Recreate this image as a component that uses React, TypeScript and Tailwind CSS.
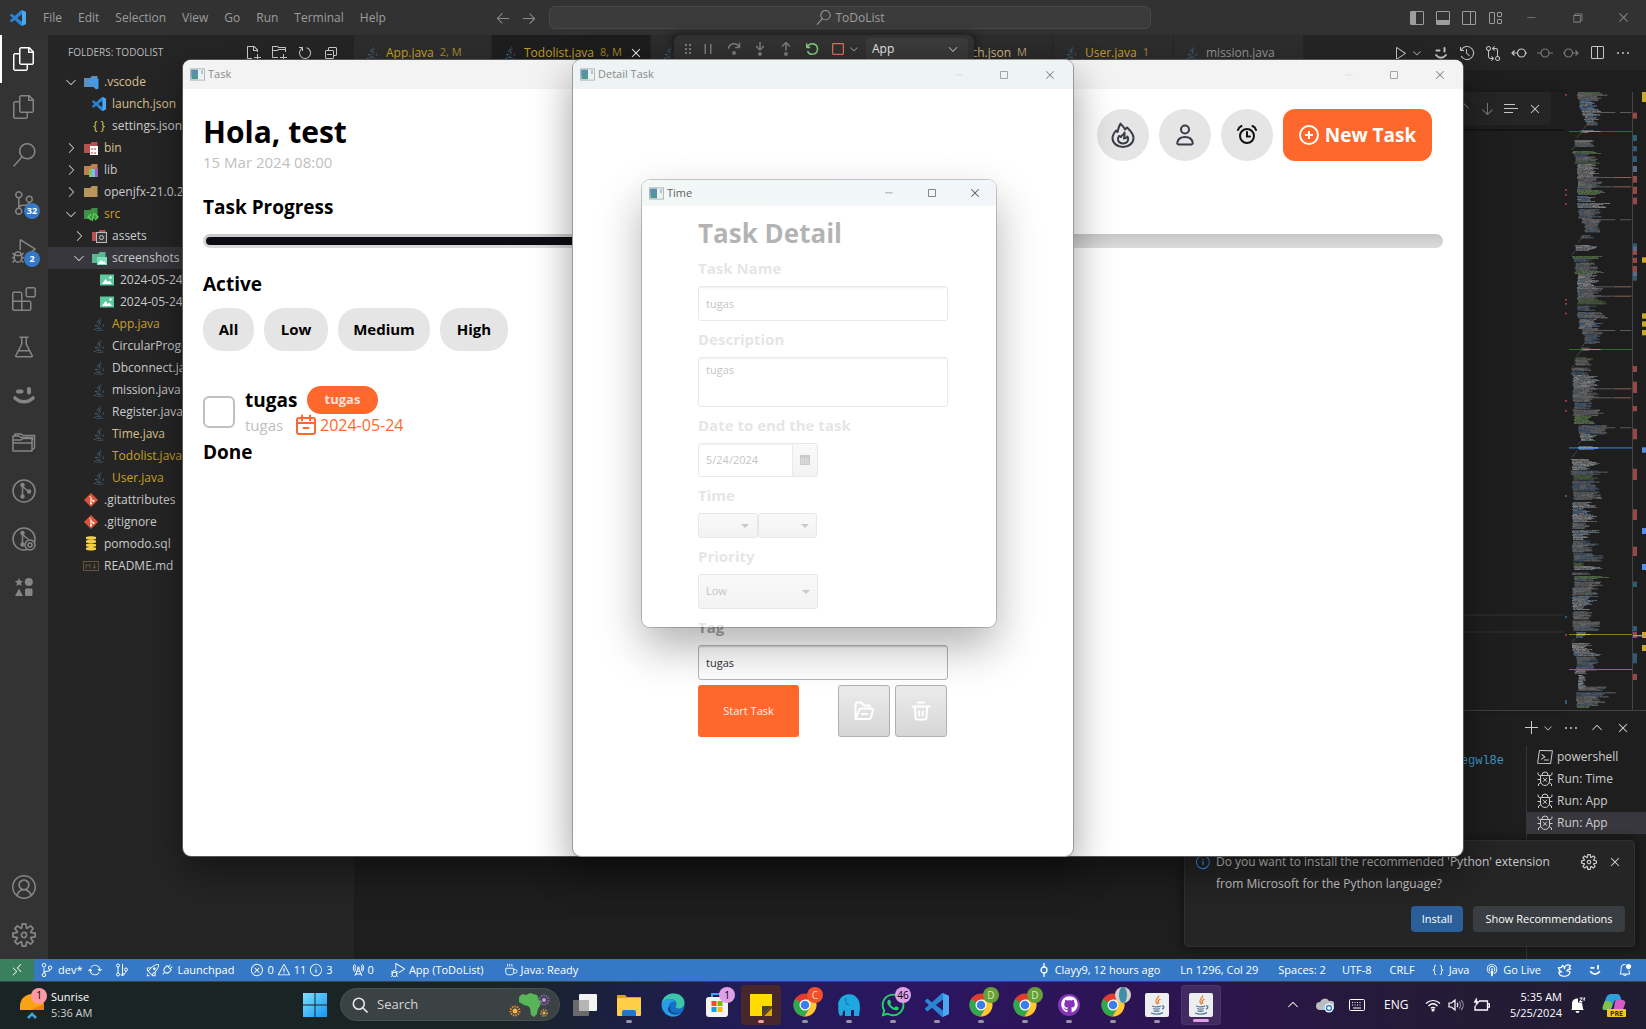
import React from "react";
import {
  VscFiles, VscSearch, VscSourceControl, VscDebugAlt, VscExtensions, VscBeaker, VscAccount, VscSettingsGear,
  VscNewFile, VscNewFolder, VscRefresh, VscCollapseAll, VscChevronDown, VscChevronRight, VscChevronUp,
  VscArrowLeft, VscArrowRight, VscArrowDown, VscArrowUp, VscLayoutSidebarLeft, VscLayoutPanel,
  VscLayoutSidebarRightOff, VscLayout, VscChromeMinimize, VscChromeRestore, VscChromeMaximize, VscChromeClose,
  VscClose, VscGripper, VscDebugPause, VscDebugStepOver, VscDebugStepInto, VscDebugStepOut, VscDebugRestart,
  VscDebugStop, VscPlay, VscHistory, VscGitCompare, VscSplitHorizontal, VscEllipsis, VscAdd, VscTerminalPowershell,
  VscInfo, VscRemote, VscSync, VscError, VscWarning, VscRadioTower, VscRocket, VscPlug, VscGitCommit,
  VscBroadcast, VscBellDot, VscJson, VscListSelection,
} from "react-icons/vsc";
import { FaJava, FaWhatsapp, FaGithub } from "react-icons/fa";

/* ---------- small drawings ---------- */

function VsLogo({ size }: { size: number }) {
  return (
    <svg width={size} height={size} viewBox="0 0 24 24">
      <path fill="#2b84d3" d="M23.15 2.587L18.21.21a1.494 1.494 0 0 0-1.705.29l-9.46 8.63-4.12-3.128a.999.999 0 0 0-1.276.057L.327 7.261A1 1 0 0 0 .326 8.74L3.899 12 .326 15.26a1 1 0 0 0 .001 1.479L1.65 17.94a.999.999 0 0 0 1.276.057l4.12-3.128 9.46 8.63a1.492 1.492 0 0 0 1.704.29l4.942-2.377A1.5 1.5 0 0 0 24 20.06V3.939a1.5 1.5 0 0 0-.85-1.352zm-5.146 14.861L10.826 12l7.178-5.448v10.896z" />
      <path fill="#4aa8f0" d="M18 .2l5.2 2.4c.5.2.8.7.8 1.300v16.200c0 .6-.3 1.100-.8 1.300L18 23.800z" />
    </svg>
  );
}

function Smile({ size }: { size: number }) {
  return (
    <svg width={size} height={size} viewBox="0 0 24 24" fill="currentColor">
      <rect x="4" y="6.500" width="7.500" height="4" rx="2" />
      <rect x="15" y="4" width="4" height="7.500" rx="2" />
      <path d="M3 15c5 5 13 5 18 0" fill="none" stroke="currentColor" strokeWidth="3.600" strokeLinecap="round" />
    </svg>
  );
}

function SmileThin({ size }: { size: number }) {
  return (
    <svg width={size} height={size} viewBox="0 0 16 16" fill="none" stroke="currentColor" strokeWidth="2" strokeLinecap="round">
      <path d="M3.500 5.500h3M11.500 3v3.500M3 10c3 3.800 7 3.800 10 0" />
    </svg>
  );
}

function Folders() {
  return (
    <svg width="24" height="24" viewBox="0 0 24 24" fill="none" stroke="currentColor" strokeWidth="1.500" strokeLinejoin="round">
      <path d="M1 9h8l2-1.500h9V20H1zM1 9V5h6l2 1.500h11.500V9M3 5V3h6l2 1.500h11.500V17l-2 1.500M1 12h19" />
    </svg>
  );
}

function GitCircle({ lens = false }: { lens?: boolean }) {
  return (
    <svg width="24" height="24" viewBox="0 0 24 24" fill="none" stroke="currentColor" strokeWidth="1.500">
      <circle cx="12" cy="12" r="11" />
      <path d="M10.500 6v12M10.500 7.500l6 5" />
      <circle cx="10.500" cy="6" r="1.500" fill="currentColor" />
      <circle cx="10.500" cy="17.500" r="1.500" fill="currentColor" />
      {lens ? (
        <>
          <circle cx="18" cy="18" r="5" fill="#333333" />
          <circle cx="18" cy="18" r="2" />
        </>
      ) : (
        <circle cx="17" cy="12.500" r="1.500" fill="currentColor" />
      )}
    </svg>
  );
}

function Shapes() {
  return (
    <svg width="24" height="24" viewBox="0 0 24 24" fill="currentColor">
      <path d="M7 3l1.200 2.700 3 .3-2.200 2 .6 3L7 9.500 4.400 11 5 8 2.800 6l3-.3zM7 13.500l4 7.500H3z" />
      <circle cx="16.800" cy="7" r="4" />
      <rect x="13" y="13.500" width="7.500" height="7.500" rx="1.200" />
    </svg>
  );
}

function BugX() {
  return (
    <svg width="16" height="16" viewBox="0 0 16 16" fill="none" stroke="currentColor">
      <path d="M5 4.500V4a3 3 0 0 1 6 0v.5M3.500 4.500h9v5.500a4.500 4.500 0 0 1-9 0zM1 1.500v2l2.500 1.500M15 1.500v2L12.500 5M.500 8.500h3M12.500 8.500h3M1.500 15v-2L4 11.500M14.500 15v-2L12 11.500M6 6.800l4 4M10 6.800l-4 4" />
    </svg>
  );
}

function Revision({ arrow }: { arrow?: "left" | "right" }) {
  return (
    <svg width="16" height="16" viewBox="0 0 16 16" fill="none" stroke="currentColor" strokeWidth="1.200" className={arrow === "left" ? "" : "text-[#7a7a7a]"}>
      <circle cx={arrow === "left" ? 10.500 : arrow === "right" ? 5.500 : 8} cy="8" r="4" />
      {arrow === "left" && <path d="M6.500 8H1M3.500 5.500L1 8l2.500 2.500M14.500 8H16" />}
      {arrow === "right" && <path d="M9.500 8H15M12.500 5.500L15 8l-2.500 2.500M1.500 8H0" />}
      {!arrow && <path d="M0 8h4M12 8h4" />}
    </svg>
  );
}

function AppGlyph() {
  return (
    <svg width="15" height="13" viewBox="0 0 16 13">
      <rect x=".5" y=".5" width="15" height="12" fill="#eef1f2" stroke="#aeb6ba" />
      <rect x="1.500" y="1.500" width="7" height="10" fill="#4d9a8f" />
      <path d="M1.500 1.500h7v4l-7 3z" fill="#5b8fb0" />
      <path d="M12.800 2v4" stroke="#6d93b5" />
    </svg>
  );
}

type Kind = "vs" | "json" | "java" | "img" | "git" | "db" | "md" | "dvs" | "dbin" | "dlib" | "dir" | "dsrc" | "dassets" | "dshots";

function FolderGlyph({ color, children }: { color: string; children?: React.ReactNode }) {
  return (
    <svg width="16" height="16" viewBox="0 0 16 16">
      <path d="M1 4h6l2-2h5.500v11H1z" fill={color} />
      {children}
    </svg>
  );
}

function FileGlyph({ kind }: { kind: Kind }) {
  switch (kind) {
    case "vs":
      return <VsLogo size={14} />;
    case "json":
      return <span className="text-xs leading-none text-[#d7c84a]">{"{ }"}</span>;
    case "java":
      return <FaJava size={14} className="text-[#4b6b87]" />;
    case "img":
      return (
        <svg width="16" height="16" viewBox="0 0 16 16">
          <rect x="1" y="2.500" width="14" height="11" fill="#5cc9a0" />
          <path d="M3 12l3.500-5L9 10l1.500-1.500L13 12z" fill="#fff" />
          <circle cx="11.500" cy="5.500" r="1.200" fill="#fff" />
        </svg>
      );
    case "git":
      return (
        <svg width="16" height="16" viewBox="0 0 16 16">
          <path d="M8 1l7 7-7 7-7-7z" fill="#d9553a" />
          <path d="M6.500 4l1.500 1.500V12M8 6.500l2.500 2.500" stroke="#fff" fill="none" />
          <circle cx="8" cy="11.500" r="1" fill="#fff" />
          <circle cx="10.500" cy="9" r="1" fill="#fff" />
        </svg>
      );
    case "db":
      return (
        <svg width="16" height="16" viewBox="0 0 16 16" fill="#f2cf4a">
          {[1, 4.600, 8.200, 11.800].map((y) => (
            <path key={y} d={`M3 ${y}c2-1 8-1 10 0v2c-2 1-8 1-10 0z`} />
          ))}
        </svg>
      );
    case "md":
      return (
        <svg width="16" height="16" viewBox="0 0 16 16" fill="none" stroke="#6b523b">
          <rect x=".5" y="3.500" width="15" height="9" />
          <path d="M3 10.500V6l2 2 2-2v4.500M11.500 5.500v5M9.800 8.500l1.700 2 1.700-2" />
        </svg>
      );
    case "dvs":
      return (
        <FolderGlyph color="#5d8fbf">
          <path d="M15.500 5v9.500l-2.500 1-6-6-1.500 1.200-1-1 1.700-2 -1.700-1.500 1-1L7 7.500 13 4zM13 7l-3.500 3 3.500 3z" fill="#3f9bf0" fillRule="evenodd" />
        </FolderGlyph>
      );
    case "dbin":
      return (
        <FolderGlyph color="#b65151">
          <rect x="7" y="6" width="8" height="9" fill="#fff" />
          <path d="M9 8v2M12 8v2M9 12v2M12 12v2" stroke="#a04040" />
        </FolderGlyph>
      );
    case "dlib":
      return (
        <FolderGlyph color="#c07f50">
          <path d="M6 7h3v8H6z" fill="#7fc36a" />
          <path d="M9 7h3v8H9z" fill="#6fc8e0" />
          <path d="M12 7h3v8h-3z" fill="#a05cc0" />
        </FolderGlyph>
      );
    case "dir":
      return <FolderGlyph color="#b9955a" />;
    case "dsrc":
      return (
        <FolderGlyph color="#3f8f45">
          <path d="M8 8l-3 3 3 3M12 8l3 3-3 3M11 7l-2 8" stroke="#57d957" strokeWidth="1.300" fill="none" />
        </FolderGlyph>
      );
    case "dassets":
      return (
        <FolderGlyph color="#b65151">
          <rect x="5.500" y="4.500" width="10" height="10" fill="#3a3a3a" stroke="#bbb" />
          <circle cx="10.500" cy="9.500" r="2" fill="none" stroke="#ccc" />
        </FolderGlyph>
      );
    default:
      return (
        <FolderGlyph color="#58b890">
          <rect x="6" y="7" width="10" height="8" fill="#7fe0bd" />
          <path d="M7 14l3-4 2 2 1-1 2 3z" fill="#fff" />
        </FolderGlyph>
      );
  }
}

/* ---------- title bar ---------- */

const MENUS = ["File", "Edit", "Selection", "View", "Go", "Run", "Terminal", "Help"];

function TitleBar() {
  return (
    <header className="flex h-[35px] shrink-0 items-center bg-[#323233] text-xs text-[#9d9d9d]">
      <div className="flex flex-[10] items-center">
        <span className="pl-[10px] pr-[17px]"><VsLogo size={16} /></span>
        <nav className="flex gap-4">
          {MENUS.map((m) => (
            <button key={m}>{m}</button>
          ))}
        </nav>
        <div className="ml-auto flex gap-[10px] pr-3 text-[#8c8c8c]">
          <button aria-label="Back"><VscArrowLeft size={16} /></button>
          <button aria-label="Forward"><VscArrowRight size={16} /></button>
        </div>
      </div>
      <button className="flex h-[23px] w-[602px] items-center justify-center gap-1 rounded-md border border-[#484848] bg-[#3b3b3c]">
        <VscSearch size={15} /> ToDoList
      </button>
      <div className="flex flex-[9] items-center justify-end">
        <div className="flex gap-[10px] pr-[5px]">
          <VscLayoutSidebarLeft size={16} />
          <VscLayoutPanel size={16} />
          <VscLayoutSidebarRightOff size={16} />
          <VscLayout size={16} />
        </div>
        <div className="flex text-[#858585]">
          <button aria-label="Minimize" className="flex w-[46px] justify-center"><VscChromeMinimize size={12} /></button>
          <button aria-label="Restore" className="flex w-[46px] justify-center"><VscChromeRestore size={13} /></button>
          <button aria-label="Close" className="flex w-[46px] justify-center"><VscChromeClose size={13} /></button>
        </div>
      </div>
    </header>
  );
}

/* ---------- activity bar ---------- */

function ActivityItem({ label, active, badge, children }: { label: string; active?: boolean; badge?: string; children: React.ReactNode }) {
  return (
    <button
      aria-label={label}
      className={
        active
          ? "relative flex h-12 w-12 items-center justify-center border-l-2 border-white pr-0.5 text-white"
          : "relative flex h-12 w-12 items-center justify-center text-[#858585]"
      }
    >
      {children}
      {badge && (
        <span className="absolute bottom-2 right-2 flex h-4 min-w-4 items-center justify-center rounded-full bg-[#3478c6] px-0.5 text-[9px] font-bold text-white">
          {badge}
        </span>
      )}
    </button>
  );
}

function ActivityBar() {
  return (
    <aside className="flex w-12 shrink-0 flex-col bg-[#333333]">
      <ActivityItem label="Explorer" active><VscFiles size={24} /></ActivityItem>
      <ActivityItem label="Files"><VscFiles size={24} /></ActivityItem>
      <ActivityItem label="Search"><VscSearch size={24} /></ActivityItem>
      <ActivityItem label="Source control" badge="32"><VscSourceControl size={24} /></ActivityItem>
      <ActivityItem label="Run and debug" badge="2"><VscDebugAlt size={24} /></ActivityItem>
      <ActivityItem label="Extensions"><VscExtensions size={24} /></ActivityItem>
      <ActivityItem label="Testing"><VscBeaker size={24} /></ActivityItem>
      <ActivityItem label="Assistant"><Smile size={24} /></ActivityItem>
      <ActivityItem label="Projects"><Folders /></ActivityItem>
      <ActivityItem label="Git graph"><GitCircle /></ActivityItem>
      <ActivityItem label="Git inspect"><GitCircle lens /></ActivityItem>
      <ActivityItem label="Shapes"><Shapes /></ActivityItem>
      <div className="mt-auto">
        <ActivityItem label="Account"><VscAccount size={24} /></ActivityItem>
        <ActivityItem label="Settings"><VscSettingsGear size={24} /></ActivityItem>
      </div>
    </aside>
  );
}

/* ---------- explorer ---------- */

type Node = { name: string; kind: Kind; level: 0 | 1 | 2; open?: boolean; tone?: string; selected?: boolean };

const GOLD = "text-[#c9a227]";
const SAND = "text-[#d9c08c]";

const TREE: Node[] = [
  { name: ".vscode", kind: "dvs", level: 0, open: true, tone: SAND },
  { name: "launch.json", kind: "vs", level: 1, tone: SAND },
  { name: "settings.json", kind: "json", level: 1 },
  { name: "bin", kind: "dbin", level: 0, open: false, tone: SAND },
  { name: "lib", kind: "dlib", level: 0, open: false },
  { name: "openjfx-21.0.2", kind: "dir", level: 0, open: false },
  { name: "src", kind: "dsrc", level: 0, open: true, tone: GOLD },
  { name: "assets", kind: "dassets", level: 1, open: false },
  { name: "screenshots", kind: "dshots", level: 1, open: true, selected: true },
  { name: "2024-05-24", kind: "img", level: 2 },
  { name: "2024-05-24", kind: "img", level: 2 },
  { name: "App.java", kind: "java", level: 1, tone: GOLD },
  { name: "CircularProgress", kind: "java", level: 1 },
  { name: "Dbconnect.java", kind: "java", level: 1 },
  { name: "mission.java", kind: "java", level: 1 },
  { name: "Register.java", kind: "java", level: 1 },
  { name: "Time.java", kind: "java", level: 1, tone: SAND },
  { name: "Todolist.java", kind: "java", level: 1, tone: GOLD },
  { name: "User.java", kind: "java", level: 1, tone: GOLD },
  { name: ".gitattributes", kind: "git", level: 0 },
  { name: ".gitignore", kind: "git", level: 0 },
  { name: "pomodo.sql", kind: "db", level: 0 },
  { name: "README.md", kind: "md", level: 0 },
];

const INDENT = ["pl-[15px]", "pl-[23px]", "pl-[31px]"];

function Explorer() {
  return (
    <section className="w-[306px] shrink-0 bg-[#252526] text-xs text-[#cccccc]">
      <div className="flex h-9 items-center pl-5">
        <h2 className="w-[106px] whitespace-nowrap text-[10px] text-[#bbbbbb]">FOLDERS: TODOLIST</h2>
        <div className="ml-[71px] flex gap-[10px]">
          <VscNewFile size={16} />
          <VscNewFolder size={16} />
          <VscRefresh size={16} />
          <VscCollapseAll size={16} />
        </div>
      </div>
      <ul>
        {TREE.map((n, i) => (
          <li key={i} className={n.selected ? "bg-[#37373d]" : ""}>
            <button className={`flex h-[22px] items-center whitespace-nowrap ${INDENT[n.level]} ${n.tone ?? ""}`}>
              <span className="mr-1 w-4 text-[#cccccc]">
                {n.open === true && <VscChevronDown size={16} />}
                {n.open === false && <VscChevronRight size={16} />}
              </span>
              <span className="mr-[5px] flex w-4 justify-center"><FileGlyph kind={n.kind} /></span>
              {n.name}
            </button>
          </li>
        ))}
      </ul>
    </section>
  );
}

/* ---------- editor ---------- */

function Tab({ name, note, width, tone, icon, active }: { name: string; note?: string; width: string; tone: string; icon: Kind; active?: boolean }) {
  return (
    <div
      className={`flex h-full shrink-0 items-center whitespace-nowrap border-r border-[#252526] pl-[10px] ${width} ${tone} ${active ? "bg-[#1e1e1e]" : "bg-[#2d2d2d]"}`}
    >
      <span className="mr-[6px] flex w-4 justify-center"><FileGlyph kind={icon} /></span>
      {name}
      {note && <span className="ml-1.5 text-[11px] opacity-80">{note}</span>}
      {active && <VscClose size={16} className="ml-auto mr-[6px] text-white" />}
    </div>
  );
}

/* [top, bottom, left, width, tint] of the blocks of code in the overview */
const BLOCKS: [number, number, number, number, string][] = [
  [36, 40, 411, 70, "g"], [41, 58, 411, 100, "w"], [60, 90, 418, 60, "b"], [90, 108, 425, 60, "w"], [105, 125, 432, 50, "b"], [124, 134, 440, 36, "w"],
  [150, 157, 422, 40, "b"], [180, 184, 404, 60, "g"], [182, 198, 404, 70, "w"], [213, 221, 396, 95, "g"], [221, 230, 402, 55, "b"], [230, 243, 404, 70, "w"],
  [245, 251, 404, 90, "g"], [252, 290, 411, 70, "w"], [290, 322, 411, 80, "w"], [322, 330, 411, 45, "b"], [330, 345, 411, 92, "g"], [348, 364, 411, 56, "b"],
  [369, 384, 411, 100, "w"], [388, 415, 415, 70, "b"], [415, 430, 425, 60, "w"], [430, 456, 433, 50, "b"], [466, 473, 422, 40, "b"], [495, 512, 404, 72, "w"],
  [528, 536, 396, 95, "g"], [536, 545, 402, 55, "b"], [548, 570, 404, 70, "w"], [573, 580, 404, 92, "g"], [582, 625, 411, 70, "w"], [625, 658, 411, 80, "w"],
  [658, 672, 411, 92, "g"], [677, 692, 411, 60, "b"], [697, 713, 411, 100, "w"], [717, 745, 416, 72, "b"], [745, 762, 427, 60, "w"], [764, 790, 433, 48, "b"],
  [803, 810, 422, 40, "b"], [832, 838, 404, 64, "g"], [838, 854, 404, 64, "w"], [863, 872, 394, 60, "w"], [875, 882, 394, 52, "b"], [885, 920, 398, 80, "w"],
  [920, 965, 398, 80, "w"], [968, 984, 402, 60, "b"], [989, 1006, 398, 100, "w"], [1008, 1032, 402, 66, "g"], [1036, 1062, 414, 90, "b"], [1062, 1082, 420, 50, "w"],
  [1098, 1110, 414, 50, "b"], [1137, 1150, 393, 90, "w"], [1152, 1168, 396, 76, "w"], [1172, 1184, 392, 120, "b"], [1184, 1198, 400, 86, "g"], [1202, 1230, 396, 90, "b"],
  [1235, 1258, 400, 90, "w"], [1266, 1282, 396, 76, "w"], [1284, 1300, 396, 58, "b"], [1302, 1325, 396, 80, "w"], [1328, 1346, 396, 60, "w"], [1350, 1360, 396, 82, "b"],
  [1362, 1380, 396, 60, "w"], [1382, 1396, 396, 80, "b"], [1396, 1415, 396, 62, "w"], [1420, 1442, 400, 100, "b"], [1448, 1456, 400, 46, "g"], [1458, 1470, 400, 100, "w"],
  [1478, 1484, 396, 60, "w"], [1488, 1495, 400, 110, "g"], [1496, 1502, 402, 60, "b"], [1505, 1518, 402, 90, "w"], [1522, 1545, 396, 80, "w"], [1548, 1570, 396, 84, "b"],
  [1572, 1590, 396, 60, "w"], [1594, 1618, 398, 60, "w"], [1622, 1642, 398, 82, "w"], [1643, 1652, 400, 80, "b"], [1656, 1674, 408, 34, "b"], [1689, 1714, 396, 64, "w"],
  [1716, 1726, 400, 90, "b"], [1730, 1770, 408, 70, "b"], [1770, 1782, 404, 44, "w"], [1785, 1825, 414, 24, "w"], [1820, 1830, 414, 96, "w"], [1837, 1850, 408, 120, "b"],
  [1850, 1875, 408, 90, "w"], [1878, 1884, 408, 44, "g"],
];

const TINTS: Record<string, string[]> = {
  w: ["#6e6e6e", "#5f5f5f", "#7a7a7a", "#55616d"],
  b: ["#45607c", "#3c5068", "#6b6b6b", "#666666"],
  g: ["#4b5f42", "#455a3a", "#4f6a42", "#555f50"],
};

function rand(n: number) {
  const v = Math.sin(n * 12.9898) * 43758.5453;
  return v - Math.floor(v);
}

function Minimap() {
  const bits: React.ReactNode[] = [];
  BLOCKS.forEach(([top, bottom, left, width, tint], b) => {
    for (let y = top; y < bottom; y += 3) {
      const end = left + width * (0.55 + 0.45 * rand(y + b));
      let x = left + 3 * Math.floor(rand(y * 3 + b) * 2);
      let k = 0;
      while (x < end) {
        const w = 6 + rand(y * 7 + k) * 20;
        bits.push(<rect key={`${b}-${y}-${k}`} x={x} y={y} width={Math.min(w, end - x)} height="3" fill={TINTS[tint][Math.floor(rand(y + k * 5) * 4)]} />);
        x += w + 1;
        k += 1;
      }
    }
  });
  const marks: [number, number, string][] = [
    [98, 18, "#9c4545"], [165, 18, "#2c5c78"], [198, 16, "#2c5c78"], [228, 18, "#2c5c78"], [258, 18, "#5a6a88"], [288, 20, "#9c4545"], [320, 22, "#9c4545"],
    [353, 20, "#9c4545"], [490, 10, "#2c5c78"], [499, 14, "#5a6a88"], [513, 12, "#9c4545"], [533, 16, "#9c4545"], [558, 18, "#9c4545"], [576, 12, "#5a6a88"],
    [588, 14, "#2c5c78"], [858, 18, "#9c4545"], [905, 34, "#9c4545"], [978, 16, "#9c4545"], [1046, 32, "#9c4545"], [1166, 34, "#9c4545"], [1288, 32, "#9c4545"],
    [1400, 28, "#9c4545"], [1505, 16, "#2c5c78"], [1638, 16, "#2c5c78"], [1656, 18, "#9c4545"], [1720, 30, "#2c5c78"], [1782, 18, "#9c4545"],
  ];
  const edge: [number, number, string][] = [
    [36, 30, "#cba72e"], [532, 16, "#cba72e"], [700, 16, "#cba72e"], [724, 16, "#cba72e"], [750, 16, "#cba72e"], [1102, 16, "#4f8ff0"], [1344, 18, "#4f8ff0"],
    [1452, 18, "#4f8ff0"], [1656, 18, "#cba72e"], [1695, 18, "#cba72e"],
  ];
  return (
    <svg className="h-full w-[82px] shrink-0 bg-[#1e1e1e]" viewBox="372 36 246 1854" preserveAspectRatio="xMinYMin slice">
      {bits}
      <g stroke="#5c5c5c" strokeWidth="2">
        <path d="M440 134l-10 14M424 158l-14 16M404 200l-10 10M424 474l-10 14M404 514l-10 12M432 790l-6 12M424 812l-14 16M404 854l-8 8M422 1084l-8 10M412 1112l-16 20M404 1676l-8 10" />
      </g>
      <g fill="#8a6353">
        {[291, 319, 619, 647, 925, 952].map((y) => (
          <rect key={y} x="520" y={y} width="54" height="3" />
        ))}
      </g>
      <g fill="#5b5b5b">
        {[96, 418, 750, 1042].map((y) => (
          <path key={y} d={`M440 ${y}h86v3h-86zM540 ${y}h34v3h-34z`} />
        ))}
        {[291, 319, 619, 647, 925, 952].map((y) => (
          <rect key={y} x="440" y={y} width="78" height="3" />
        ))}
      </g>
      <path d="M387 153h189v3H387zM387 807h189v3H387zM387 1101h189v5H387z" fill="#2d5795" />
      <path d="M428 153h54v3h-54zM428 807h54v3h-54zM414 1101h60v5h-60z" fill="#5a95ee" />
      <path d="M387 1662h189v3H387zM387 1767h189v3H387z" fill="#8a7726" />
      <path d="M408 1662h44v3h-44z" fill="#d3b32e" />
      <g fill="#a04040">
        {[42, 327, 342, 369, 657, 669, 698, 960, 990, 1662].map((y) => (
          <rect key={y} x="375" y={y} width="6" height="5" />
        ))}
      </g>
      <path d="M375 1245h6v6h-6zM375 1608h6v6h-6zM375 1860h6v12h-6z" fill="#2c5c78" />
      <path d="M576 36h3v1854h-3z" fill="#454545" />
      {marks.map(([y, h, c]) => (
        <rect key={y} x="579" y={y} width="12" height={h} fill={c} />
      ))}
      {edge.map(([y, h, c]) => (
        <rect key={y} x="606" y={y} width="12" height={h} fill={c} />
      ))}
      <path d="M579 1665h39v4h-39z" fill="#a0a0a0" />
    </svg>
  );
}

function DebugToolbar() {
  return (
    <div className="absolute left-[674px] top-[35px] flex h-7 w-[300px] items-center rounded-md bg-[#333333] px-[6px] text-[#7f7f7f] shadow-[0_0_8px_2px_rgba(0,0,0,0.4)]">
      <VscGripper size={16} />
      <div className="ml-1 flex gap-[10px]">
        <VscDebugPause size={16} />
        <VscDebugStepOver size={16} />
        <VscDebugStepInto size={16} />
        <VscDebugStepOut size={16} />
        <VscDebugRestart size={16} className="text-[#89d185]" />
        <VscDebugStop size={16} className="text-[#e0745f]" />
      </div>
      <VscChevronDown size={12} className="ml-0.5 text-[#b0b0b0]" />
      <div className="relative ml-1.5 flex flex-1 items-center rounded-sm bg-[#3c3c3c]">
        <select aria-label="Debug session" className="h-[22px] w-full appearance-none bg-transparent pl-1.5 text-xs text-[#f0f0f0]">
          <option>App</option>
        </select>
        <VscChevronDown size={14} className="pointer-events-none absolute right-2 text-[#cccccc]" />
      </div>
    </div>
  );
}

function Editor() {
  return (
    <main className="flex min-w-0 flex-1 flex-col bg-[#1e1e1e] text-xs">
      <div className="flex h-[35px] shrink-0 items-center bg-[#252526]">
        <Tab name="App.java" note="2, M" width="w-[138px]" tone="text-[#c9a227]" icon="java" />
        <Tab name="Todolist.java" note="8, M" width="w-[159px]" tone="text-[#c9a227]" icon="java" active />
        <Tab name="Time.java" width="w-[264px]" tone="text-[#d9c08c]" icon="java" />
        <Tab name="launch.json" note="M" width="w-[138px]" tone="text-[#d9c08c]" icon="vs" />
        <Tab name="User.java" note="1" width="w-[121px]" tone="text-[#c9a227]" icon="java" />
        <Tab name="mission.java" width="w-[130px]" tone="text-[#969696]" icon="java" />
        <div className="ml-auto flex items-center gap-[10px] pr-[15px] text-[#c5c5c5]">
          <span className="flex items-center"><VscPlay size={16} /><VscChevronDown size={12} className="ml-0.5" /></span>
          <SmileThin size={16} />
          <VscHistory size={16} />
          <VscGitCompare size={16} />
          <Revision arrow="left" />
          <Revision />
          <Revision arrow="right" />
          <VscSplitHorizontal size={16} />
          <VscEllipsis size={16} />
        </div>
      </div>
      <div className="flex min-h-0 flex-1 pt-[22px]">
        <div className="flex min-w-0 flex-1 flex-col shadow-[4px_0_6px_-2px_rgba(0,0,0,0.6)]">
          <div className="flex h-[39px] shrink-0 items-start justify-end border-b-2 border-[#141414] pr-[13px]">
            <div className="flex h-[33px] w-[400px] items-center justify-end gap-2 rounded-b bg-[#252526] pr-2 text-[#c5c5c5]">
              <VscArrowUp size={16} className="text-[#7a7a7a]" />
              <VscArrowDown size={16} className="text-[#7a7a7a]" />
              <VscListSelection size={16} />
              <VscClose size={16} />
            </div>
          </div>
          <div className="flex-1" />
          <div className="mb-[77px] h-[19px] border-y-2 border-[#282828]" />
        </div>
        <Minimap />
      </div>
      <section className="flex h-[249px] shrink-0 flex-col border-t border-[#414141] text-[#cccccc]">
        <div className="flex h-[34px] items-center justify-end pr-[15px]">
          <VscAdd size={16} />
          <VscChevronDown size={12} className="ml-0.5" />
          <VscEllipsis size={16} className="ml-[9px]" />
          <VscChevronUp size={16} className="ml-[10px]" />
          <VscClose size={16} className="ml-[10px]" />
        </div>
        <div className="flex flex-1 pt-px">
          <p className="flex-1 pr-[22px] pt-[5px] text-right font-['Liberation_Mono',monospace] text-[12px] leading-5 text-[#3f9ac9]">egwl8e</p>
          <ul className="w-[120px] border-l border-[#353535]">
            {["powershell", "Run: Time", "Run: App", "Run: App"].map((t, i) => (
              <li key={i} className={`flex h-[22px] items-center gap-1 pl-[10px] ${i === 3 ? "bg-[#37373d]" : ""}`}>
                {i === 0 ? <VscTerminalPowershell size={16} /> : <BugX />}
                {t}
              </li>
            ))}
          </ul>
        </div>
      </section>
    </main>
  );
}

function Notification() {
  return (
    <div className="absolute bottom-[82px] right-[11px] h-[107px] w-[451px] rounded border border-[#303031] bg-[#252526] pl-[10px] pr-[9px] pt-[10px] text-xs text-[#cccccc] shadow-[0_0_8px_2px_rgba(0,0,0,0.36)]">
      <div className="flex">
        <VscInfo size={16} className="mt-[3px] shrink-0 text-[#3794ff]" />
        <p className="ml-[5px] w-[348px] leading-[22px]">Do you want to install the recommended 'Python' extension from Microsoft for the Python language?</p>
        <button aria-label="Notification settings" className="ml-auto mr-[10px] mt-[3px] self-start"><VscSettingsGear size={16} /></button>
        <button aria-label="Dismiss" className="mr-[2px] mt-[3px] self-start"><VscClose size={16} /></button>
      </div>
      <div className="mt-[11px] flex justify-end gap-[10px] whitespace-nowrap">
        <button className="h-[26px] w-[52px] rounded-sm bg-[#2b5f9a] text-[11px] text-white">Install</button>
        <button className="h-[26px] w-[152px] rounded-sm bg-[#3a3d41] text-[11px] text-white">Show Recommendations</button>
      </div>
    </div>
  );
}

/* ---------- status bar ---------- */

function StatusBar() {
  return (
    <footer className="flex h-[22px] shrink-0 items-center whitespace-nowrap bg-[#3478c6] text-[11px] text-white">
      <button aria-label="Remote" className="flex h-full w-[34px] items-center justify-center bg-[#3a7f5e]"><VscRemote size={14} /></button>
      <span className="ml-[6px] flex items-center gap-1"><VscSourceControl size={14} />dev* <VscSync size={14} className="ml-0.5" /></span>
      <svg className="ml-[13px]" width="14" height="14" viewBox="0 0 14 14" fill="none" stroke="currentColor">
        <circle cx="3" cy="2.500" r="1.500" /><circle cx="3" cy="11.500" r="1.500" /><circle cx="11" cy="6.500" r="1.500" />
        <path d="M3 4v6M7.500 1v12M5.500 11l2 2 2-2M11 8c0 2-1.500 3-3.500 3" />
      </svg>
      <span className="ml-[17px] flex items-center"><VscRocket size={14} /><VscPlug size={14} className="mr-[3px] rotate-45" />Launchpad</span>
      <span className="ml-4 flex items-center gap-[3px]"><VscError size={14} />0 <VscWarning size={14} />11 <VscInfo size={14} />3</span>
      <span className="ml-[18px] flex items-center gap-[3px]"><VscRadioTower size={14} />0</span>
      <span className="ml-[17px] flex items-center gap-1"><VscDebugAlt size={14} />App (ToDoList)</span>
      <span className="ml-5 flex items-center gap-[3px]">
        <svg width="14" height="14" viewBox="0 0 16 16" fill="none" stroke="currentColor">
          <path d="M2 6h9v4.500a3 3 0 0 1-3 3H5a3 3 0 0 1-3-3zM11 7.500h2a1.500 1.500 0 0 1 0 4h-2M4 1v3M6.500 1v3M9 1v3" />
        </svg>
        Java: Ready
      </span>
      <span className="ml-auto flex items-center gap-1">
        <svg width="14" height="14" viewBox="0 0 14 14" fill="none" stroke="currentColor" strokeWidth="1.300"><circle cx="7" cy="7" r="3" /><path d="M7 0v4M7 10v4" /></svg>
        Clayy9, 12 hours ago
      </span>
      <span className="ml-[20px]">Ln 1296, Col 29</span>
      <span className="ml-5">Spaces: 2</span>
      <span className="ml-4">UTF-8</span>
      <span className="ml-[18px]">CRLF</span>
      <span className="ml-4 flex items-center gap-1"><VscJson size={14} />Java</span>
      <span className="ml-4 flex items-center gap-1"><VscBroadcast size={14} />Go Live</span>
      <svg className="ml-4" width="15" height="15" viewBox="0 0 16 16" fill="none" stroke="currentColor" strokeWidth="1.300" strokeLinejoin="round">
        <path d="M1.500 5h3L6 2.500c2 1 2 2.500 2 3.500 0-2 1.500-4 4-4 1 0 2 .5 2.500 1L13 5l1.500 1.500c-2 0-3.500.5-4 2 1.500 0 3 .5 3.500 1.500-1 3-4 4.500-7.500 4-3-.5-4.500-2.500-4.500-4.500 1 .5 2 .5 3 0C3 9 2 7 1.500 5z" />
      </svg>
      <span className="ml-4"><SmileThin size={14} /></span>
      <VscBellDot size={14} className="ml-4 mr-[14px]" />
    </footer>
  );
}

/* ---------- taskbar ---------- */

function Chrome() {
  return (
    <svg width="24" height="24" viewBox="0 0 24 24">
      <circle cx="12" cy="12" r="11.500" fill="#e33b2e" />
      <path d="M12 12L2 6.200A11.500 11.500 0 0 0 11.500 23.500l5-9z" fill="#2da94f" />
      <path d="M12 6.500h10A11.500 11.500 0 0 1 11.500 23.500l5.300-9z" fill="#fcc934" />
      <circle cx="12" cy="12" r="5.500" fill="#fff" />
      <circle cx="12" cy="12" r="4.300" fill="#3b7ded" />
    </svg>
  );
}

function JavaTile() {
  return (
    <svg width="24" height="24" viewBox="0 0 24 24">
      <rect width="24" height="24" rx="2" fill="#eceef0" />
      <path d="M13.500 2.500c1 2.500-4 4-2.500 6.500.5 1 1.500 1.500 1.500 2.500M15.500 6c-3 1.500-3 2.500-1.500 4.500" fill="none" stroke="#e8792b" strokeWidth="1.300" />
      <path d="M7 13c3 1 7 1 9 0M8 15.500c2.500.8 5 .8 7 0M8.500 17.800c2 .6 4 .6 6 0M6 20c4 1.500 9 1.200 12-.3M17 13c2.500-.6 2.500 2.500 0 3" fill="none" stroke="#55799b" strokeWidth="1.300" />
    </svg>
  );
}

function TaskIcon({ label, badge, badgeClass, run, state, children }: {
  label: string; badge?: string; badgeClass?: string; run?: boolean; state?: "alert" | "active"; children: React.ReactNode;
}) {
  const bg = state === "alert" ? "bg-[#47272c]" : state === "active" ? "border border-white/5 bg-white/10" : "";
  const bar = state === "alert" ? "w-1.5 bg-[#ff99a4]" : state === "active" ? "w-4 bg-[#dfa0e8]" : "w-1.5 bg-[#9a93a8]";
  return (
    <button aria-label={label} className={`relative flex h-10 w-10 items-center justify-center rounded ${bg}`}>
      {children}
      {badge !== undefined && (
        <span className={`absolute right-0.5 top-0.5 flex h-4 min-w-4 items-center justify-center rounded-full px-0.5 text-[10px] leading-none ${badgeClass}`}>{badge}</span>
      )}
      {(run || state) && <span className={`absolute bottom-0.5 h-[3px] rounded-full ${bar}`} />}
    </button>
  );
}

const PINK = "bg-[#dfa0e8] text-black";

function Taskbar() {
  return (
    <footer className="flex h-12 shrink-0 items-center border-t border-[#3a4650] bg-[linear-gradient(90deg,#1b2424_30%,#1b2040_37%,#221b58_46%,#2b1560_56%,#2c1450_72%,#251a38_85%,#201d33)] pb-0.5 text-[11px] text-white">
      <div className="flex w-[293px] items-center pl-[19px]">
        <div className="relative">
          <svg width="26" height="30" viewBox="0 0 26 30">
            <path d="M1 20V16a12 12 0 0 1 24 0v4z" fill="#f7a315" />
            <path d="M12 20L25 14v6z" fill="#ee7d1a" />
            <path d="M9 28l4-4 4 4" fill="none" stroke="#35a7f5" strokeWidth="2.500" />
          </svg>
          <span className="absolute -right-0.5 -top-0.5 flex h-4 w-4 items-center justify-center rounded-full bg-[#ff99a4] text-[10px] text-black">1</span>
        </div>
        <div className="ml-[6px] leading-4">
          <div>Sunrise</div>
          <div className="text-[#d0d0d0]">5:36 AM</div>
        </div>
      </div>
      <button aria-label="Start" className="ml-[2px] flex h-10 w-10 items-center justify-center">
        <svg width="24" height="24" viewBox="0 0 24 24">
          <defs>
            <linearGradient id="win" x1="0" y1="0" x2="1" y2="1"><stop stopColor="#7fe0ff" /><stop offset="1" stopColor="#1296f5" /></linearGradient>
          </defs>
          <path d="M0 0h11.500v11.500H0zM12.500 0H24v11.500H12.500zM0 12.500h11.500V24H0zM12.500 12.500H24V24H12.500z" fill="url(#win)" />
        </svg>
      </button>
      <label className="ml-[5px] flex h-[33px] w-[220px] items-center rounded-full border border-[#4a5254] bg-[#3a4244] pl-[11px] pr-2">
        <svg width="16" height="16" viewBox="0 0 16 16" fill="none" stroke="#e8e8e8" strokeWidth="1.600"><circle cx="6.800" cy="6.800" r="5.500" /><path d="M11 11l4.500 4.500" /></svg>
        <input aria-label="Search" placeholder="Search" className="ml-[9px] w-24 flex-1 bg-transparent text-[13px] placeholder:text-[#d5d5d5]" />
        <svg width="42" height="26" viewBox="0 0 42 26">
          <path d="M10 5l3-3 4 1 4-2 7 2 2 5 3 1-2 5-2 3-1 5-3 3-3-2-1-7-2-2-4-1-5-3z" fill="#58b558" />
          <circle cx="6" cy="19" r="4.500" fill="none" stroke="#e8872e" strokeWidth="2" strokeDasharray="1.500 1" /><circle cx="6" cy="19" r="2.500" fill="#ffb13d" />
          <circle cx="35" cy="8" r="4.500" fill="none" stroke="#8a62b5" strokeWidth="2" strokeDasharray="1.500 1" /><circle cx="35" cy="8" r="2" fill="#c79ae0" />
          <circle cx="35" cy="21" r="3" fill="none" stroke="#b5863a" strokeWidth="2" strokeDasharray="1.500 1" /><circle cx="35" cy="21" r="1.500" fill="#e0b95a" />
        </svg>
      </label>
      <div className="ml-[5px] flex gap-1">
        <TaskIcon label="Task view">
          <svg width="24" height="24" viewBox="0 0 24 24"><rect x="0" y="7" width="16" height="16" rx="1" fill="#6a6a6a" /><rect x="6" y="1" width="18" height="17" rx="1" fill="#f2f2f2" /><path d="M6 7h10v11H6z" fill="#b5b5b5" /></svg>
        </TaskIcon>
        <TaskIcon label="File Explorer" run>
          <svg width="24" height="24" viewBox="0 0 24 24"><path d="M0 2h8l2 2h14v4H0z" fill="#e0a021" /><rect x="0" y="5" width="24" height="18" rx="1" fill="#ffcf48" /><path d="M5 23v-4a2 2 0 0 1 2-2h10a2 2 0 0 1 2 2v4z" fill="#1c78c8" /></svg>
        </TaskIcon>
        <TaskIcon label="Edge">
          <svg width="24" height="24" viewBox="0 0 24 24"><circle cx="12" cy="12" r="11.500" fill="#1470c4" /><path d="M1 9C3 2 9 .5 13 .5c6 0 10.500 4 10.500 9 0 4-3 6-6 6-2 0-3.500-1-2.500-2.500C17 9 13 5.500 9 6 5 6 2 8 1 11z" fill="#3cc6a8" /><path d="M1 10c3-5 11-5 13-1-5-1-8 4-5 9 2 4 7 5 11 2-3 4-9 4.500-13 2S0 15 1 10z" fill="#2a9de8" /><path d="M9 13c-1 6 5 9 11 6-3 3-9 3.500-12 0-2-2-1-5 1-6z" fill="#124a94" /></svg>
        </TaskIcon>
        <TaskIcon label="Store" badge="1" badgeClass={PINK}>
          <svg width="24" height="26" viewBox="0 0 24 26"><path d="M7 5V2h10v3" fill="none" stroke="#35a7f5" strokeWidth="2" /><rect x="1" y="5" width="22" height="20" rx="3" fill="#f4f4f4" /><path d="M6.500 9h5v5h-5z" fill="#f25022" /><path d="M12.500 9h5v5h-5z" fill="#7fba00" /><path d="M6.500 15h5v5h-5z" fill="#00a4ef" /><path d="M12.500 15h5v5h-5z" fill="#ffb900" /></svg>
        </TaskIcon>
        <TaskIcon label="Sticky Notes" state="alert">
          <svg width="22" height="22" viewBox="0 0 22 22"><path d="M0 0h22v12L12 22H0z" fill="#fddb00" /><path d="M12 22V12h10z" fill="#4a4030" /><path d="M14 22l8-8v8z" fill="#d9a800" /></svg>
        </TaskIcon>
        <TaskIcon label="Chrome profile C" run badge="C" badgeClass="bg-[#f0512a] text-[#ffd0c0]"><Chrome /></TaskIcon>
        <TaskIcon label="Database" run>
          <svg width="24" height="24" viewBox="0 0 24 24"><path d="M3 6C6 1 16-1 20 5c4 4 3 12 2 18h-5v-6h-3v6H8v-6c-2 1-3 3-2 5l-3 1C0 18 2 13 1 10z" fill="#1fa8e0" /><path d="M9 5c-1 3 0 6 3 7" fill="none" stroke="#0b78ad" strokeWidth="1.200" /></svg>
        </TaskIcon>
        <TaskIcon label="WhatsApp" run badge="46" badgeClass={PINK}><FaWhatsapp size={26} className="text-[#25d366]" /></TaskIcon>
        <TaskIcon label="Visual Studio Code" run><VsLogo size={24} /></TaskIcon>
        <TaskIcon label="Chrome profile D" run badge="D" badgeClass="bg-[#689f38] text-[#d8ecc0]"><Chrome /></TaskIcon>
        <TaskIcon label="Chrome profile D 2" run badge="D" badgeClass="bg-[#689f38] text-[#d8ecc0]"><Chrome /></TaskIcon>
        <TaskIcon label="GitHub Desktop" run><span className="flex h-[22px] w-[22px] items-center justify-center rounded-full bg-[#8534b8]"><FaGithub size={17} className="text-white" /></span></TaskIcon>
        <TaskIcon label="Chrome profile photo" run badge="" badgeClass="border-x-4 border-[#d8d0cc] bg-[#3f8fa5]"><Chrome /></TaskIcon>
        <TaskIcon label="Java app" run><JavaTile /></TaskIcon>
        <TaskIcon label="Java app window" state="active"><JavaTile /></TaskIcon>
      </div>
      <div className="ml-auto flex items-center pr-5">
        <VscChevronUp size={16} />
        <svg className="ml-[15px]" width="18" height="16" viewBox="0 0 18 16"><path d="M4 13a4 4 0 0 1 0-8 5 5 0 0 1 9-1 4 4 0 0 1 3 9z" fill="#b9bcc2" /><circle cx="13" cy="11" r="4.500" fill="#fff" /><circle cx="13" cy="11" r="2.500" fill="none" stroke="#2a80d0" strokeWidth="1.400" /></svg>
        <svg className="ml-[15px]" width="16" height="14" viewBox="0 0 16 14" fill="none" stroke="#fff"><rect x=".5" y="1.500" width="15" height="11" rx="1" /><path d="M3 4.500h10M3 7h10" strokeDasharray="1 1.500" /><path d="M4 10h8" /></svg>
        <span className="ml-[19px] w-6 text-xs">ENG</span>
        <svg className="ml-[17px]" width="16" height="14" viewBox="0 0 16 14" fill="none" stroke="#fff" strokeWidth="1.200"><path d="M1 5.500c4-4 10-4 14 0M3.500 8c3-3 6-3 9 0M5.800 10.300c1.500-1.300 3-1.300 4.400 0" /><circle cx="8" cy="12" r="1" fill="#fff" /></svg>
        <svg className="ml-[7px]" width="16" height="14" viewBox="0 0 16 14" fill="none" stroke="#fff" strokeWidth="1.200"><path d="M1 5h2.500L7 2v10L3.500 9H1zM9 5c1 1 1 3 0 4" /><path d="M11 3.500c2 2 2 5 0 7M13 2c3 3 3 7 0 10" stroke="#8d86a0" /></svg>
        <svg className="ml-[9px]" width="17" height="14" viewBox="0 0 17 14" fill="none" stroke="#fff" strokeWidth="1.300"><path d="M6 3h8.500v9H2V8M15 6h1.500v3H15" /><path d="M3.500 0L1 4.500h2.500L2.500 8l4-4.500H4z" fill="#fff" strokeWidth=".5" /></svg>
        <div className="ml-[10px] w-[62px] text-right leading-4">
          <div>5:35 AM</div>
          <div>5/25/2024</div>
        </div>
        <svg className="ml-[8px]" width="16" height="16" viewBox="0 0 16 16" fill="#fff"><path d="M2 12V6a5 5 0 0 1 6-4.500v4h4l1 6.500 1 1H1zM5.500 14h4a2 2 0 0 1-4 0z" /><path d="M9.500 1h3l-3 3.500h3M13.500 1H15l-1.500 2H15" stroke="#fff" fill="none" /></svg>
        <svg className="ml-[16px]" width="24" height="24" viewBox="0 0 24 24"><path d="M9 1h6c2 0 3 1 3.500 3l1 3h-5c-2 0-3 2-4 6-1 3-2 4-4 4H3c-2 0-3-1-2-4L4 5c1-3 3-4 5-4z" fill="#2e9fd8" /><path d="M1 13l2-5c4 0 8 0 7 5-.8 3-2 4-4 4H3c-2 0-3-1-2-4z" fill="#7ec24a" /><path d="M14.500 7H20c2 0 4 1 3 4l-3 8H9c3-1 3-5 3.500-8 .4-2 1-4 2-4z" fill="#d45bc8" /><rect x="5" y="16" width="19" height="8" rx="1" fill="#f8c51c" /><text x="14.500" y="22.700" textAnchor="middle" fontSize="7" fontWeight="700" fill="#3a2d10">PRE</text></svg>
      </div>
    </footer>
  );
}

/* ---------- application windows ---------- */

function WindowBar({ title, bar, cell, dim }: { title: string; bar: string; cell: string; dim: string }) {
  return (
    <div className={`flex shrink-0 items-center pl-[7px] text-[11px] ${bar}`}>
      <AppGlyph />
      <span className="ml-[3px]">{title}</span>
      <div className="ml-auto flex">
        <button aria-label="Minimize" className={`flex justify-center ${cell} ${dim}`}><VscChromeMinimize size={11} /></button>
        <button aria-label="Maximize" className={`flex justify-center ${cell}`}><VscChromeMaximize size={12} /></button>
        <button aria-label="Close" className={`flex justify-center ${cell}`}><VscChromeClose size={12} /></button>
      </div>
    </div>
  );
}

function RoundButton({ label, children }: { label: string; children: React.ReactNode }) {
  return (
    <button aria-label={label} className="flex h-[52px] w-[52px] items-center justify-center rounded-full bg-[#e5e5e5] text-[#3a3c49]">{children}</button>
  );
}

function TaskWindow() {
  return (
    <section className="absolute left-[183px] top-[60px] flex h-[796px] w-[1280px] flex-col overflow-hidden rounded-lg bg-white font-bold text-black shadow-[0_0_0_1px_#555,0_16px_40px_rgba(0,0,0,0.45)]">
      <WindowBar title="Task" bar="h-[29px] bg-[#f3f3f3] font-normal text-[#8a8a8a]" cell="w-[46px]" dim="text-[#d8d8d8]" />
      <div className="px-5 pt-5">
        <div className="flex items-start justify-between pr-[11px]">
          <div>
            <h1 className="text-[30px] leading-[45px]">Hola, test</h1>
            <p className="text-[15px] font-normal leading-4 text-[#c0c0c0]">15 Mar 2024 08:00</p>
          </div>
          <div className="flex gap-[10px]">
            <RoundButton label="Streak">
              <svg width="24" height="26" viewBox="0 0 24 26" fill="none" stroke="currentColor" strokeWidth="2" strokeLinejoin="round">
                <path d="M9.500 1.500c1.500 2 3.500 3.500 4.500 6l2-2c3 3 6.500 6 6.500 10.500 0 5-4.500 9-10.500 9S1.500 21 1.500 16c0-3 1.500-5 3.500-7.500l1.500 1.500c1-3 1-5.500 3-8.500z" />
                <path d="M13.500 10.500c-1 2.500-2.500 2.500-3.500 4.500l-2-1c-2 2.500-1.500 7.500 4 7.500 5 0 6-4 4.500-7-1 1.500-2 1.800-3.500 2 .5-1.500 1-4 .5-6z" />
              </svg>
            </RoundButton>
            <RoundButton label="Profile">
              <svg width="18" height="22" viewBox="0 0 18 22" fill="none" stroke="currentColor" strokeWidth="2" strokeLinejoin="round">
                <circle cx="9" cy="5.500" r="4" />
                <path d="M2.500 20.500c-1 0-1.500-1-1.200-2C2 15 5 13 9 13s7 2 7.700 5.500c.3 1-.2 2-1.200 2z" />
              </svg>
            </RoundButton>
            <RoundButton label="Alarm">
              <svg width="20" height="20" viewBox="0 0 20 20" fill="none" stroke="#111" strokeWidth="2" strokeLinecap="round">
                <circle cx="10" cy="11" r="7" />
                <path d="M10 7v4.500h3M1 5c.5-2 2-3.500 3.500-4M19 5c-.5-2-2-3.500-3.500-4" />
              </svg>
            </RoundButton>
            <button className="flex h-[52px] w-[149px] items-center justify-center gap-[6px] whitespace-nowrap rounded-xl bg-[#ff682c] text-[19px] text-white">
              <svg width="20" height="20" viewBox="0 0 20 20" fill="none" stroke="currentColor" strokeWidth="2"><circle cx="10" cy="10" r="9" /><path d="M10 6v8M6 10h8" /></svg>
              New Task
            </button>
          </div>
        </div>
        <h2 className="mt-[23px] text-[19px] leading-7">Task Progress</h2>
        <div role="progressbar" aria-label="Task progress" aria-valuenow={50} className="mt-[13px] h-[14px] rounded-full bg-linear-to-b from-[#c8c8c8] to-[#dcdcdc] p-[3px]">
          <div className="h-2 w-1/2 rounded-full bg-[#0c0d12]" />
        </div>
        <h2 className="mt-[22px] text-[19px] leading-7">Active</h2>
        <div className="mt-[10px] flex gap-[10px] text-[15px]">
          <button className="h-[43px] w-[51px] rounded-[20px] bg-[#e5e5e5]">All</button>
          <button className="h-[43px] w-[64px] rounded-[20px] bg-[#e5e5e5]">Low</button>
          <button className="h-[43px] w-[92px] rounded-[20px] bg-[#e5e5e5]">Medium</button>
          <button className="h-[43px] w-[68px] rounded-[20px] bg-[#e5e5e5]">High</button>
        </div>
        <div className="mt-[35px] flex items-center gap-[10px]">
          <input id="done" type="checkbox" className="mt-0.5 h-8 w-8 appearance-none rounded-md border-2 border-[#c0c0c0] bg-white" />
          <div>
            <div className="flex h-[28px] items-center gap-[11px]">
              <label htmlFor="done" className="w-[51px] text-[19px] leading-7">tugas</label>
              <span className="flex h-7 w-[71px] items-center justify-center rounded-full bg-[#ff682c] text-[13px] text-[#ffe0d8]">tugas</span>
            </div>
            <div className="flex h-[22px] items-center font-normal">
              <span className="w-[50px] text-[15px] text-[#c0c0c0]">tugas</span>
              <svg width="22" height="22" viewBox="0 0 22 22" fill="none" stroke="#ff682c" strokeWidth="2" strokeLinecap="round">
                <rect x="2" y="4" width="18" height="16" rx="2" /><path d="M2.500 9h17M7 1.500v5M15 1.500v5M8.500 14h5" />
              </svg>
              <span className="ml-[3px] text-[16px] text-[#ff682c]">2024-05-24</span>
            </div>
          </div>
        </div>
        <h2 className="mt-0.5 text-[19px] leading-7">Done</h2>
      </div>
    </section>
  );
}

const FIELD = "rounded-[3px] border border-[#b5b5b5] bg-white px-[7px] text-[11px] text-[#333333] shadow-[inset_0_2px_2px_-1px_#cfcfcf]";
const GREY = "border border-[#b0b0b0] bg-linear-to-b from-[#ececec] to-[#d6d6d6]";

function Label({ htmlFor, children }: { htmlFor: string; children: React.ReactNode }) {
  return <label htmlFor={htmlFor} className="flex h-9 items-center text-[15px] font-bold text-[#a9a9a9]">{children}</label>;
}

function Caret({ pos }: { pos: string }) {
  return <svg className={`pointer-events-none absolute ${pos}`} width="8" height="4" viewBox="0 0 8 4"><path d="M0 0h8L4 4z" fill="#4a4a4a" /></svg>;
}

function DetailWindow() {
  return (
    <section className="absolute left-[573px] top-[60px] flex h-[796px] w-[500px] flex-col overflow-hidden rounded-lg bg-white text-black shadow-[0_0_0_1px_#9a9a9a,0_16px_40px_rgba(0,0,0,0.4)]">
      <WindowBar title="Detail Task" bar="h-[29px] bg-[#eef3f3] text-[#8a8a8a]" cell="w-[46px]" dim="text-[#d8d8d8]" />
      <form className="flex w-[250px] flex-col self-center pt-[121px]" onSubmit={(e) => e.preventDefault()}>
        <h1 className="h-10 text-[26px] font-bold leading-[46px]">Task Detail</h1>
        <Label htmlFor="name">Task Name</Label>
        <input id="name" defaultValue="tugas" className={`h-[35px] ${FIELD}`} />
        <Label htmlFor="desc">Description</Label>
        <textarea id="desc" defaultValue="tugas" className={`h-[50px] resize-none pt-1 ${FIELD}`} />
        <Label htmlFor="date">Date to end the task</Label>
        <div className="flex h-[34px] w-[120px]">
          <input id="date" defaultValue="5/24/2024" className={`w-[95px] rounded-r-none ${FIELD}`} />
          <button type="button" aria-label="Pick date" className={`flex w-[25px] items-center justify-center rounded-r-[3px] border-l-0 ${GREY}`}>
            <svg width="10" height="10" viewBox="0 0 10 10"><path d="M0 0h10v10H0z" fill="#4a4a4a" /><path d="M1 4h8M1 6h8M1 8h8" stroke="#d8d8d8" strokeDasharray="1.300 .8" /></svg>
          </button>
        </div>
        <Label htmlFor="hour">Time</Label>
        <div className="flex h-[25px]">
          <div className="relative w-[60px]">
            <select id="hour" className={`h-full w-full appearance-none rounded-[3px] ${GREY}`} />
            <Caret pos="right-[9px] top-[11px]" />
          </div>
          <div className="relative w-[59px]">
            <select aria-label="Minute" className={`h-full w-full appearance-none rounded-[3px] ${GREY}`} />
            <Caret pos="right-[8px] top-[11px]" />
          </div>
        </div>
        <Label htmlFor="priority">Priority</Label>
        <div className="relative h-[35px] w-[120px]">
          <select id="priority" className={`h-full w-full appearance-none rounded-[3px] px-[7px] text-[11px] text-[#333333] ${GREY}`}>
            <option>Low</option>
          </select>
          <Caret pos="right-[8px] top-4" />
        </div>
        <Label htmlFor="tag">Tag</Label>
        <input id="tag" defaultValue="tugas" className={`h-[35px] ${FIELD}`} />
        <div className="mt-[5px] flex">
          <button className="h-[52px] w-[101px] rounded-[3px] bg-[#ff682c] text-[11px] text-[#fff0ea]">Start Task</button>
          <button type="button" aria-label="Open" className={`ml-[39px] flex h-[52px] w-[52px] items-center justify-center rounded-[3px] ${GREY}`}>
            <svg width="20" height="20" viewBox="0 0 20 20" fill="none" stroke="#fff" strokeWidth="2" strokeLinejoin="round" strokeLinecap="round">
              <path d="M1.500 18V3.500a2 2 0 0 1 2-2h4L10 4.500h5.500v3M1.500 18L5 9.500a3 3 0 0 1 2.500-2H17c1.500 0 2 1 1.700 2l-1.500 6.500c-.3 1.300-1.200 2-2.400 2zM8 13h5" />
            </svg>
          </button>
          <button type="button" aria-label="Delete" className={`ml-[5px] flex h-[52px] w-[52px] items-center justify-center rounded-[3px] ${GREY}`}>
            <svg width="20" height="20" viewBox="0 0 20 20" fill="none" stroke="#fff" strokeWidth="2" strokeLinecap="round" strokeLinejoin="round">
              <path d="M1.500 5.500h17M7 1.500h6M4 5.500l.5 11a2 2 0 0 0 2 2h7a2 2 0 0 0 2-2l.5-11M8.200 10.500v4M11.800 10.500v4" />
            </svg>
          </button>
        </div>
      </form>
    </section>
  );
}

function TimeWindow() {
  return (
    <section className="absolute left-[642px] top-[180px] flex h-[447px] w-[354px] flex-col overflow-hidden rounded-lg bg-white/70 text-black shadow-[0_0_0_1px_rgba(0,0,0,0.2),0_20px_44px_rgba(0,0,0,0.3)]">
      <WindowBar title="Time" bar="h-[26px] bg-linear-to-r from-[#f1f8f6] to-[#f2f6fa] text-[#606060]" cell="w-[43px]" dim="text-[#909090]" />
    </section>
  );
}

export default function App() {
  return (
    <div className="relative flex h-screen flex-col overflow-hidden bg-[#1e1e1e] font-['Open_Sans','Noto_Sans',sans-serif]">
      <TitleBar />
      <div className="flex min-h-0 flex-1">
        <ActivityBar />
        <Explorer />
        <Editor />
      </div>
      <StatusBar />
      <Taskbar />
      <DebugToolbar />
      <Notification />
      <TaskWindow />
      <DetailWindow />
      <TimeWindow />
    </div>
  );
}
